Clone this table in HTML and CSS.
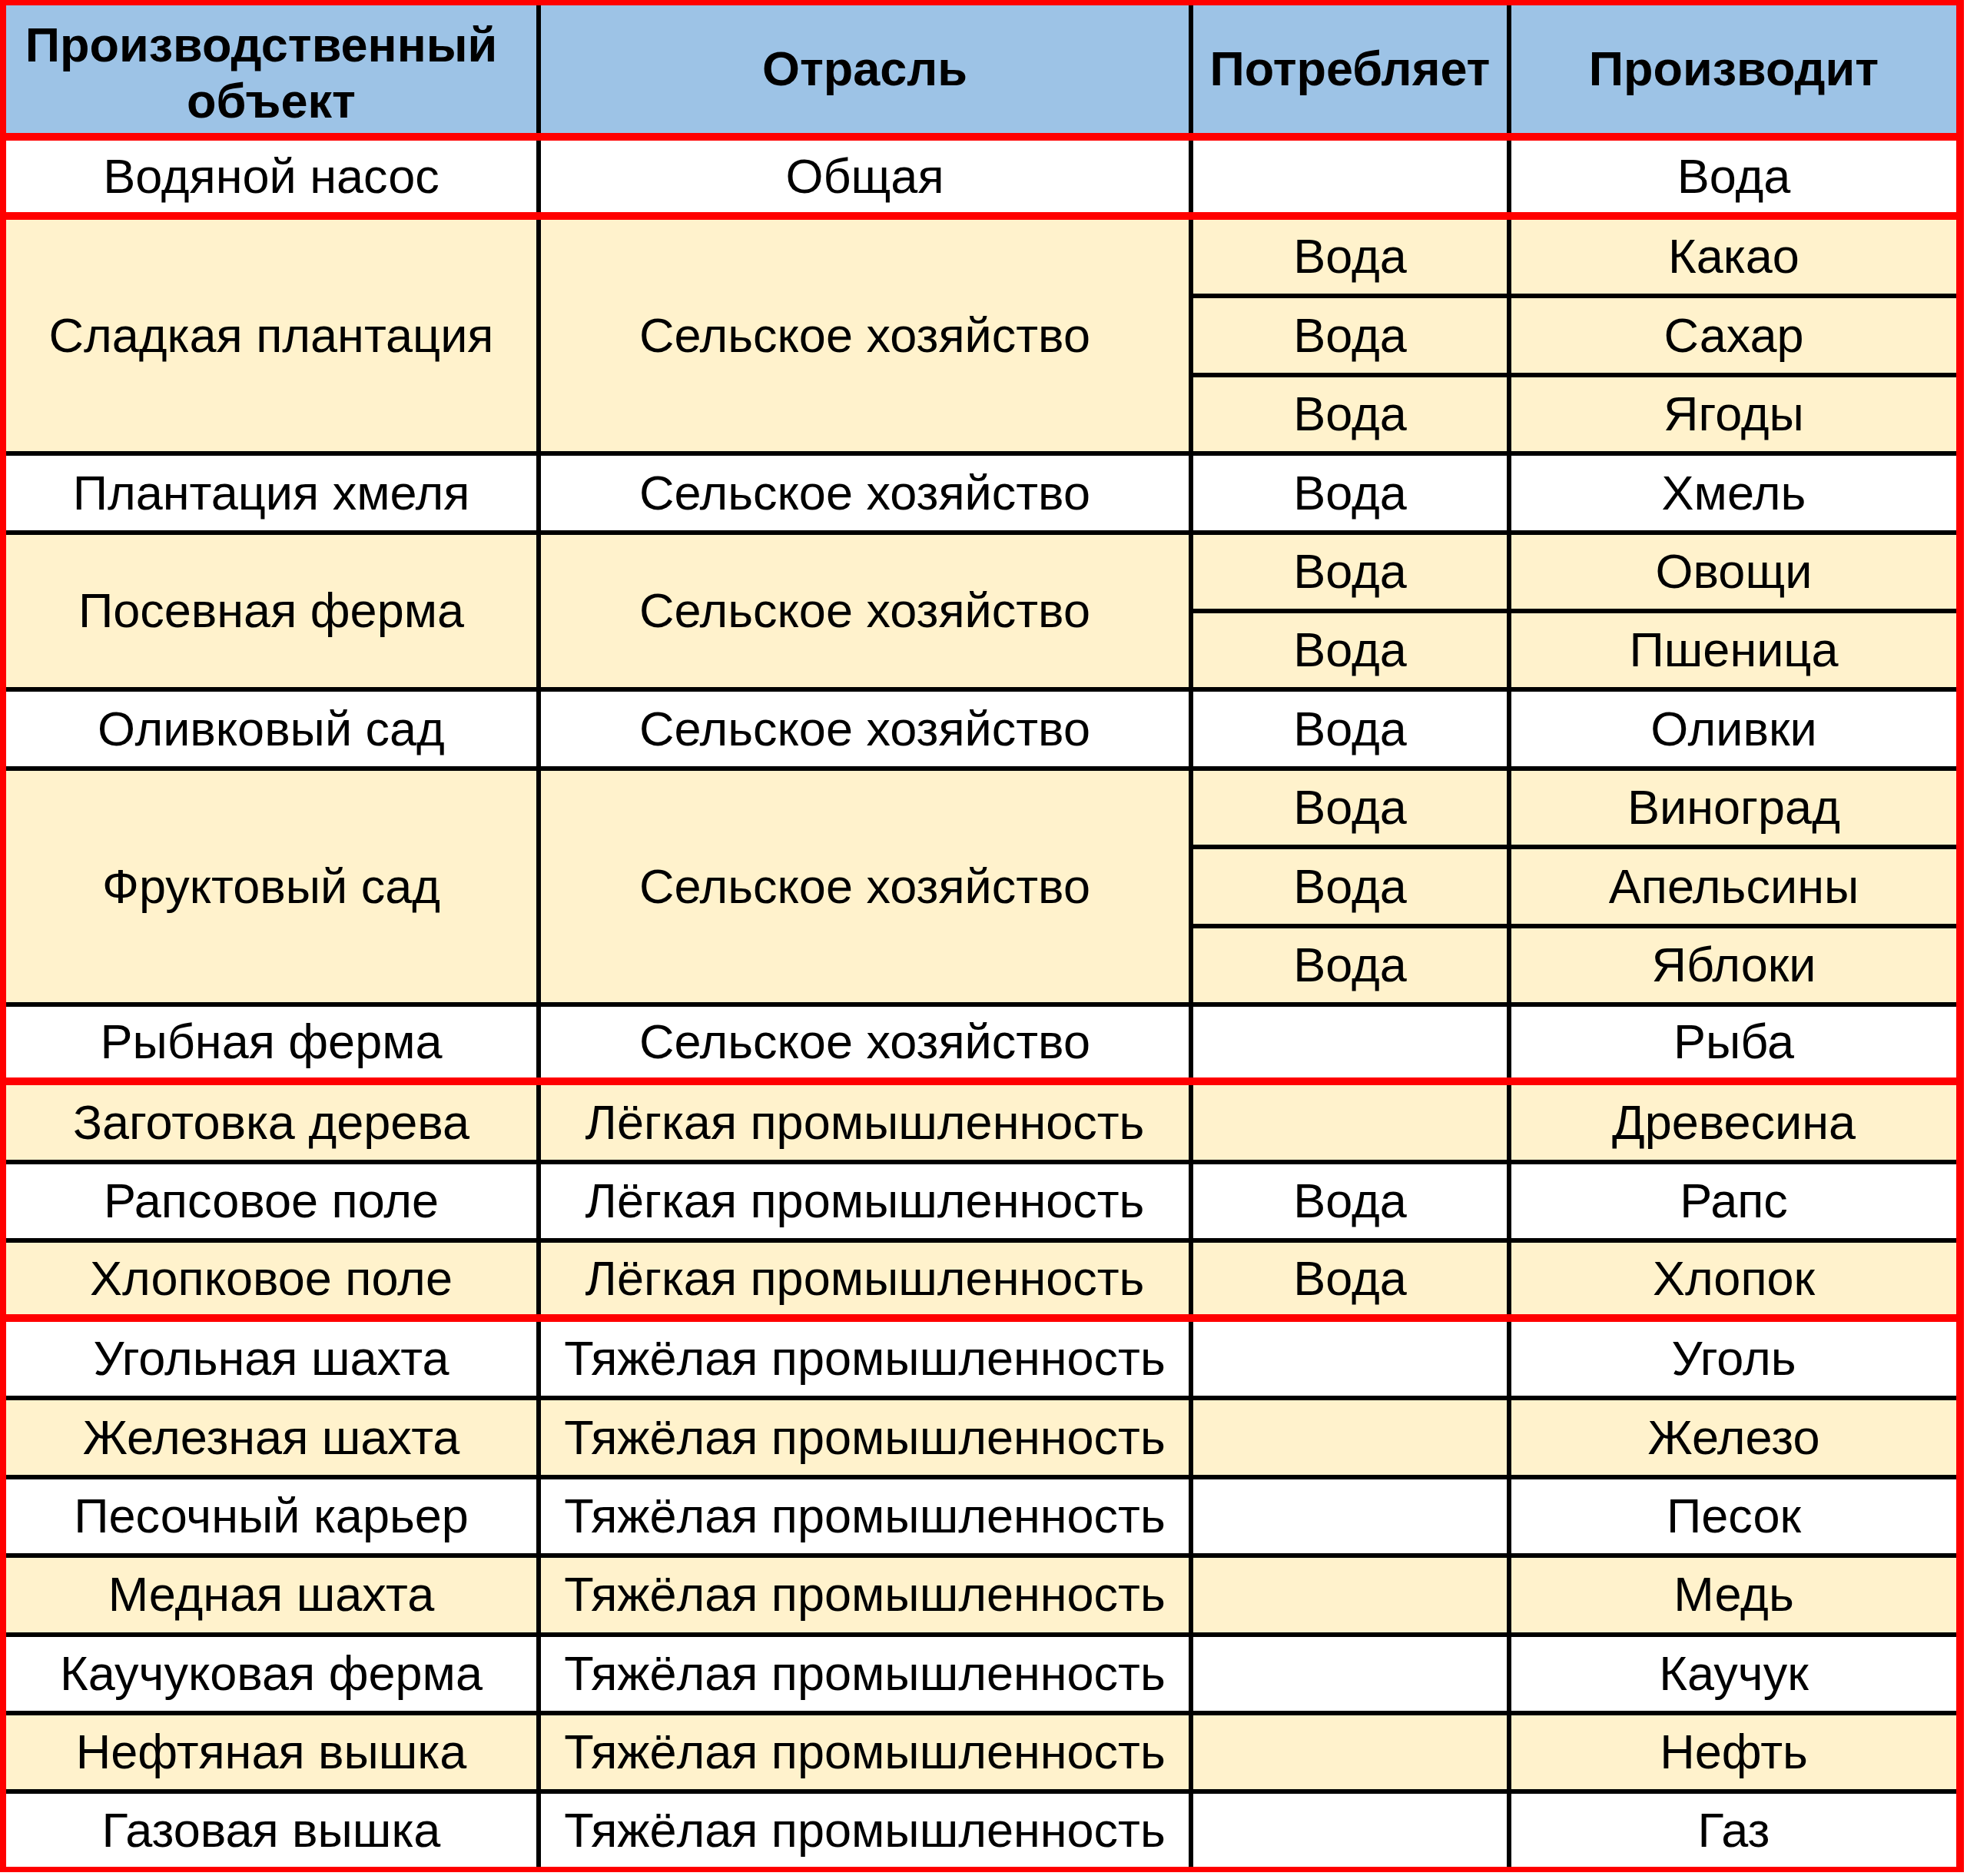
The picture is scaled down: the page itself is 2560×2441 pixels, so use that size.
FILE: index.html
```html
<!DOCTYPE html>
<html lang="ru">
<head>
<meta charset="utf-8">
<title>Производственные объекты</title>
<link rel="stylesheet" href="styles.css">
</head>
<body>
<div class="frame">
<table class="prod">
<colgroup>
<col class="c1"><col class="c2"><col class="c3"><col class="c4">
</colgroup>
<thead>
<tr class="head sep-red">
<th class="wrap">Производственный объект</th><th>Отрасль</th><th>Потребляет</th><th>Производит</th>
</tr>
</thead>
<tbody>
<tr class="white sep-red after-red"><td>Водяной насос</td><td>Общая</td><td></td><td>Вода</td></tr>

<tr class="cream after-red"><td rowspan="3">Сладкая плантация</td><td rowspan="3">Сельское хозяйство</td><td>Вода</td><td>Какао</td></tr>
<tr class="cream"><td>Вода</td><td>Сахар</td></tr>
<tr class="cream"><td>Вода</td><td>Ягоды</td></tr>

<tr class="white"><td>Плантация хмеля</td><td>Сельское хозяйство</td><td>Вода</td><td>Хмель</td></tr>

<tr class="cream"><td rowspan="2">Посевная ферма</td><td rowspan="2">Сельское хозяйство</td><td>Вода</td><td>Овощи</td></tr>
<tr class="cream"><td>Вода</td><td>Пшеница</td></tr>

<tr class="white"><td>Оливковый сад</td><td>Сельское хозяйство</td><td>Вода</td><td>Оливки</td></tr>

<tr class="cream"><td rowspan="3">Фруктовый сад</td><td rowspan="3">Сельское хозяйство</td><td>Вода</td><td>Виноград</td></tr>
<tr class="cream"><td>Вода</td><td>Апельсины</td></tr>
<tr class="cream"><td>Вода</td><td>Яблоки</td></tr>

<tr class="white sep-red"><td>Рыбная ферма</td><td>Сельское хозяйство</td><td></td><td>Рыба</td></tr>

<tr class="cream after-red"><td>Заготовка дерева</td><td>Лёгкая промышленность</td><td></td><td>Древесина</td></tr>
<tr class="white"><td>Рапсовое поле</td><td>Лёгкая промышленность</td><td>Вода</td><td>Рапс</td></tr>
<tr class="cream sep-red"><td>Хлопковое поле</td><td>Лёгкая промышленность</td><td>Вода</td><td>Хлопок</td></tr>

<tr class="white after-red"><td>Угольная шахта</td><td>Тяжёлая промышленность</td><td></td><td>Уголь</td></tr>
<tr class="cream"><td>Железная шахта</td><td>Тяжёлая промышленность</td><td></td><td>Железо</td></tr>
<tr class="white"><td>Песочный карьер</td><td>Тяжёлая промышленность</td><td></td><td>Песок</td></tr>
<tr class="cream"><td>Медная шахта</td><td>Тяжёлая промышленность</td><td></td><td>Медь</td></tr>
<tr class="white"><td>Каучуковая ферма</td><td>Тяжёлая промышленность</td><td></td><td>Каучук</td></tr>
<tr class="cream"><td>Нефтяная вышка</td><td>Тяжёлая промышленность</td><td></td><td>Нефть</td></tr>
<tr class="white last"><td>Газовая вышка</td><td>Тяжёлая промышленность</td><td></td><td>Газ</td></tr>
</tbody>
</table>
</div>
</body>
</html>
```
FILE: styles.css
```css
html, body {
  margin: 0;
  padding: 0;
  background: #ffffff;
}

.frame {
  width: fit-content;
  border-style: solid;
  border-color: #ff0000;
  border-width: 7px 10px 7px 8px;
}

.prod {
  table-layout: fixed;
  width: 2538px;
  border-collapse: collapse;
  border-style: hidden;
  font-family: "Liberation Sans", Arial, sans-serif;
  font-size: 63px;
  color: #000000;
}

.c1 { width: 693px; }
.c2 { width: 849px; }
.c3 { width: 414px; }
.c4 { width: 582px; }

.prod th,
.prod td {
  border: 6px solid #000000;
  padding: 0;
  text-align: center;
  vertical-align: middle;
  white-space: nowrap;
  line-height: 1.14;
}

.prod th {
  font-weight: bold;
  white-space: normal;
}

.prod th.wrap {
  padding-top: 9px;
  line-height: 1.15;
  text-indent: -26px;
}

.head {
  height: 171.3px;
  background: #9dc3e6;
}

/* row pitch between separator centre lines */
.prod tbody tr { height: 102.4px; }
.prod tbody tr.sep-red { height: 100.4px; }
.prod tbody tr.after-red { height: 104.6px; }
.prod tbody tr.sep-red.after-red { height: 102.6px; }
.prod tbody tr.last { height: 97.7px; }

.white { background: #ffffff; }
.cream { background: #fff2cc; }

.sep-red > th,
.sep-red > td {
  border-bottom: 10px solid #ff0000;
}
```
